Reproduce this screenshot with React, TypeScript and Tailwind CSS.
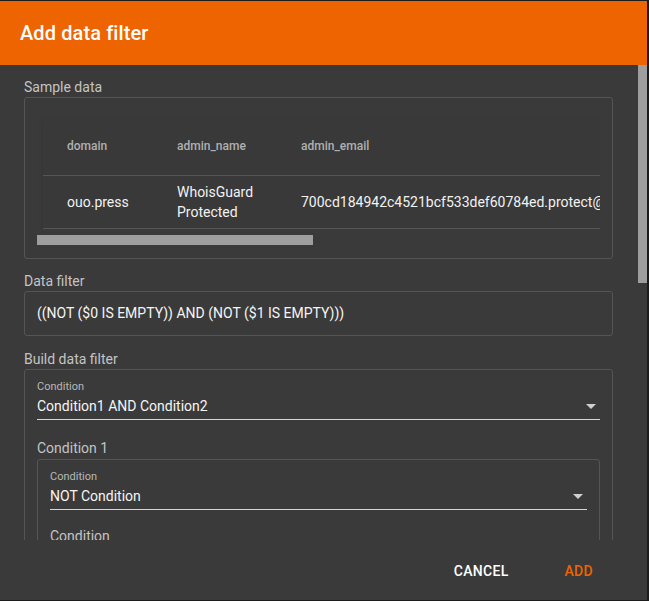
import React from "react";

function Arrow() {
  return (
    <svg width="10" height="5" viewBox="0 0 10 5" className="shrink-0">
      <path d="M0 0 L10 0 L5 5 Z" fill="#d0d0d0" />
    </svg>
  );
}

export default function App() {
  return (
    <div
      className="w-[649px] h-[601px] bg-[#1c1c1c] pt-px pb-px pr-[2px] overflow-hidden"
      style={{ fontFamily: "Roboto, 'Noto Sans', sans-serif" }}
    >
      <div className="flex flex-col h-full bg-[#3a3a3a]">
        <div className="h-[64px] shrink-0 bg-[#ee6400] px-5 flex items-center">
          <span className="text-white text-[20px] font-medium tracking-[0.1px]">Add data filter</span>
        </div>
        <div className="flex flex-1 min-h-0">
          <div className="flex-1 min-w-0 overflow-hidden pl-6 pr-[25px] pt-3">
            <div className="text-[14px] leading-[20px] text-[#c4c4c4]">Sample data</div>
            <div className="border border-[#555555] rounded-[3px] h-[162px] px-3 pt-[19px]">
              <div className="overflow-hidden">
                <div className="ml-[6px] w-[600px] bg-[#393939] shadow-[2px_3px_5px_rgba(0,0,0,0.35)]">
                  <div className="flex h-[59px] items-center border-b border-[#555555] text-[12px] font-medium text-[#b0b0b0]">
                    <div className="w-[134px] shrink-0 pl-6">domain</div>
                    <div className="w-[124px] shrink-0">admin_name</div>
                    <div className="flex-1">admin_email</div>
                  </div>
                  <div className="flex h-[53px] items-center border-b border-[#555555] text-[14px] text-[#f2f2f2] whitespace-nowrap">
                    <div className="w-[134px] shrink-0 pl-6">ouo.press</div>
                    <div className="w-[124px] shrink-0 leading-[20px] whitespace-normal pr-10">WhoisGuard Protected</div>
                    <div className="flex-1">700cd184942c4521bcf533def60784ed.protect@</div>
                  </div>
                </div>
              </div>
              <div className="mt-[6px] h-[10px] w-[276px] bg-[#9e9e9e]"></div>
            </div>
            <div className="mt-[12px] text-[14px] leading-[20px] text-[#c4c4c4]">Data filter</div>
            <div className="border border-[#555555] rounded-[3px] h-[45px] px-3 flex items-center text-[14px] text-[#f5f5f5]">
              ((NOT ($0 IS EMPTY)) AND (NOT ($1 IS EMPTY)))
            </div>
            <div className="mt-[13px] text-[14px] leading-[20px] text-[#c4c4c4]">Build data filter</div>
            <div className="border border-[#555555] rounded-[3px] px-3 pt-[10px] h-[260px]">
              <div className="text-[11px] leading-[14px] text-[#b8b8b8]">Condition</div>
              <div className="flex items-center justify-between h-[26px] border-b border-[#d6d6d6] pr-[4px]">
                <span className="text-[14px] text-[#f5f5f5]">Condition1 AND Condition2</span>
                <Arrow />
              </div>
              <div className="mt-[18px] text-[14px] leading-[20px] text-[#c4c4c4]">Condition 1</div>
              <div className="mt-[1px] border border-[#555555] rounded-[3px] px-3 pt-[10px] h-[200px]">
                <div className="text-[11px] leading-[14px] text-[#b8b8b8]">Condition</div>
                <div className="flex items-center justify-between h-[26px] border-b border-[#d6d6d6] pr-[4px]">
                  <span className="text-[14px] text-[#f5f5f5]">NOT Condition</span>
                  <Arrow />
                </div>
                <div className="mt-[16px] text-[14px] leading-[20px] text-[#c4c4c4]">Condition</div>
              </div>
            </div>
          </div>
          <div className="w-[9px] shrink-0">
            <div className="h-[218px] bg-[#9e9e9e]"></div>
          </div>
        </div>
        <div className="h-[60px] shrink-0 flex items-center justify-end pr-[54px] gap-[56px] pt-[3px]">
          <span className="text-[14px] font-medium text-white tracking-[0.3px]">CANCEL</span>
          <span className="text-[14px] font-medium text-[#ee6400] tracking-[0.3px]">ADD</span>
        </div>
      </div>
    </div>
  );
}
